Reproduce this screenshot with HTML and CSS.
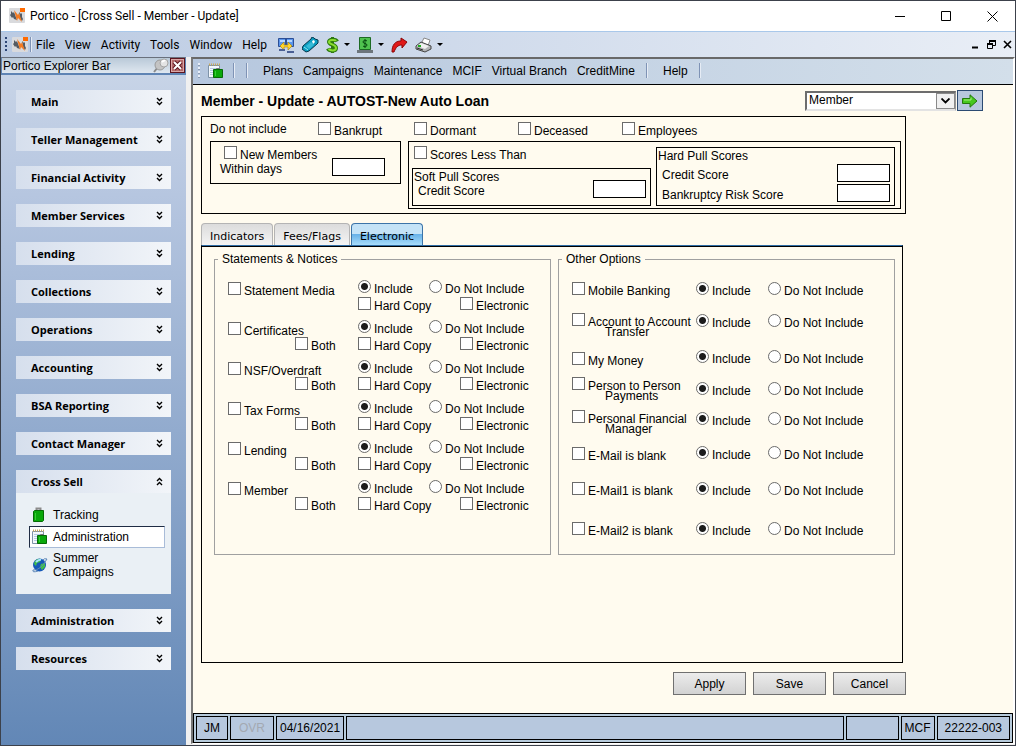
FILE: index.html
```html
<!DOCTYPE html>
<html lang="en">
<head>
  <meta charset="UTF-8">
  <title>Portico - [Cross Sell - Member - Update]</title>
  <link rel="stylesheet" href="styles.css">
</head>
<body>

  <!-- Shared icons -->
  <svg class="defs" width="0" height="0">
    <symbol id="logo" viewBox="0 0 16 16">
      <rect width="16" height="15" rx="1" fill="#d9dadd"/>
      <path d="M2 3l2 2 1-1 3 8-3-1-1-2-1 1-2-3 1-1zM10 4l2 2 1-1v4l1 2-1 2-2-3z" fill="#555b63"/>
      <path d="M5 2l4 5 1-2 3 9-4-4-1 3z" fill="#f47a20"/>
      <rect x="11" y="0" width="5" height="4" fill="#ff6a00"/>
    </symbol>
    <symbol id="bag-page" viewBox="0 0 16 16">
      <path d="M.5 2.500h11v12H.5z" fill="#f4f8fc" stroke="#7e93a8"/>
      <path d="M1 1.500h11" stroke="#c9a95a" stroke-width="2" stroke-dasharray="1 1"/>
      <path d="M2 5.500h8M2 7.500h4M2 9.500h3M2 11.500h3" stroke="#b5c9e2"/>
      <path d="M8.500 7V5.500h3V7" fill="none" stroke="#777"/>
      <path d="M5.500 6.500h9v8h-9z" fill="#0aa80a" stroke="#056a05"/>
      <path d="M7.500 8v5" stroke="#35cf35"/>
    </symbol>
    <symbol id="down" viewBox="0 0 7 9">
      <path d="M1 1l2.500 2.500L6 1M1 5l2.500 2.500L6 5" fill="none" stroke="#000" stroke-width="1.400"/>
    </symbol>
    <symbol id="up" viewBox="0 0 7 9">
      <path d="M1 4l2.500-2.500L6 4M1 8l2.500-2.500L6 8" fill="none" stroke="#000" stroke-width="1.400"/>
    </symbol>
  </svg>

  <header class="titlebar">
    <svg class="icon16"><use href="#logo"/></svg>
    <span class="title">Portico - [Cross Sell - Member - Update]</span>
    <div class="window-buttons">
      <button aria-label="Minimize"><svg width="11" height="11"><path d="M0 5.500h10" stroke="#000"/></svg></button>
      <button aria-label="Maximize"><svg width="11" height="11"><path d="M.5.5h9v9h-9z" fill="none" stroke="#000"/></svg></button>
      <button aria-label="Close"><svg width="11" height="11"><path d="M.5.500l10 10M10.500.5l-10 10" stroke="#000"/></svg></button>
    </div>
  </header>

  <nav class="menubar">
    <span class="grip"></span>
    <svg class="icon16"><use href="#logo"/></svg>
    <span class="divider"></span>
    <div class="menus">
      <a href="#">File</a>
      <a href="#">View</a>
      <a href="#">Activity</a>
      <a href="#">Tools</a>
      <a href="#">Window</a>
      <a href="#">Help</a>
    </div>
    <div class="tools">
      <button aria-label="Transfer">
        <svg width="17" height="16"><path d="M.5 1.500h8v8h-8zM7.500 1.500h8v8h-8z" fill="#5b95ea" stroke="#2c4f96"/><path d="M2 3h5v2H2zM9 3h5v2H9z" fill="#b5d6ff"/><path d="M2 9l4-4v3h4V5l4 4-4 4v-3H6v3z" fill="#ffd52e" stroke="#a87c00" stroke-width=".6"/><path d="M1 13h6M9 15h7" stroke="#4a5f94" stroke-width="2"/></svg>
      </button>
      <button aria-label="Terminal">
        <svg width="17" height="16"><path d="M1 9L9 2l1-2 2 1 1 1 3 1v3l-1 1-8 7-3 1-4-3z" fill="#0b9cc0" stroke="#05384e"/><path d="M4 9l5-4 3 3-5 4z" fill="#37bbd8"/><path d="M10 4l2-1 1 2-2 2z" fill="#fff"/><path d="M2 10l4 3" stroke="#8ee9f5"/></svg>
      </button>
      <button class="dropdown" aria-label="Money">
        <svg width="13" height="16"><path d="M11 4.500C10 2 3 2 3 5s7 2.500 7 6-7 3-8 .5" fill="none" stroke="#2f7a10" stroke-width="4"/><path d="M6.500 0v16" stroke="#2f7a10" stroke-width="3"/><path d="M10 4C9 2.500 3 2.500 3 5s7 2.500 7 6-6 2.500-7.500 1" fill="none" stroke="#8ade30" stroke-width="2"/></svg>
        <span class="caret"></span>
      </button>
      <button class="dropdown" aria-label="Cash">
        <svg width="16" height="16"><path d="M0 13h16v3H0z" fill="#6d757c"/><path d="M2.500.5h11v12h-11z" fill="#4fc24f" stroke="#1d6b24"/><path d="M10 4C9 3 6 3 6 5s4 1 4 3-3 2-4 1M8 2v9" fill="none" stroke="#074a10"/></svg>
        <span class="caret"></span>
      </button>
      <button aria-label="Forward">
        <svg width="17" height="16"><path d="M1 15C1 8 4 4 10 4V1l6 4-5 6V8c-4 0-6 2-8 7z" fill="#e01818" stroke="#8c0505"/></svg>
      </button>
      <button class="dropdown" aria-label="Print">
        <svg width="17" height="16"><path d="M6 7l3-6 6 2-2 6z" fill="#fff" stroke="#888"/><path d="M1 9l5-4 10 4v3l-6 3-9-3z" fill="#b4b6b8" stroke="#444"/><path d="M2 9l4-3 8 3-4 3z" fill="#f0f0f0"/><path d="M2 11l6 2" stroke="#333"/><path d="M3 9h3" stroke="#1faf1f" stroke-width="2"/></svg>
        <span class="caret"></span>
      </button>
    </div>
    <div class="child-buttons">
      <button aria-label="Minimize window"><svg width="9" height="9"><path d="M1 7.500h6" stroke="#000" stroke-width="2"/></svg></button>
      <button aria-label="Restore window"><svg width="9" height="9"><path d="M2.500 3V.5h6v5H6M.5 3.500h5v5h-5z" fill="none" stroke="#000"/><path d="M2 1h7M0 4h6" stroke="#000" stroke-width="2"/></svg></button>
      <button aria-label="Close window"><svg width="9" height="9"><path d="M1 1l7 7M8 1L1 8" stroke="#000" stroke-width="1.600"/></svg></button>
    </div>
  </nav>

  <div class="workspace">

    <!-- Explorer bar -->
    <aside class="explorer">
      <div class="explorer-head">
        <span>Portico Explorer Bar</span>
        <button aria-label="Pin"><svg width="16" height="15"><path d="M1 14l4-5" stroke="#8a8a8a" stroke-width="2"/><ellipse cx="7" cy="7" rx="5" ry="5" fill="#c4c4c4" stroke="#9a9a9a"/><circle cx="11" cy="5" r="4" fill="#e4e4e4" stroke="#a5a5a5"/><path d="M9 4q2-2 3-1" stroke="#fff" fill="none" stroke-width="2"/></svg></button>
        <button aria-label="Close explorer"><svg width="15" height="15"><rect x=".5" y=".5" width="14" height="14" fill="#b56a6a" stroke="#5d1620"/><rect x="1.500" y="1.500" width="12" height="12" fill="none" stroke="#d9a7a7"/><path d="M4 4l7 7M11 4l-7 7" stroke="#5d1620" stroke-width="4"/><path d="M4 4l7 7M11 4l-7 7" stroke="#fff" stroke-width="2"/></svg></button>
      </div>
      <div class="groups">
        <button class="group">Main <svg><use href="#down"/></svg></button>
        <button class="group">Teller Management <svg><use href="#down"/></svg></button>
        <button class="group">Financial Activity <svg><use href="#down"/></svg></button>
        <button class="group">Member Services <svg><use href="#down"/></svg></button>
        <button class="group">Lending <svg><use href="#down"/></svg></button>
        <button class="group">Collections <svg><use href="#down"/></svg></button>
        <button class="group">Operations <svg><use href="#down"/></svg></button>
        <button class="group">Accounting <svg><use href="#down"/></svg></button>
        <button class="group">BSA Reporting <svg><use href="#down"/></svg></button>
        <button class="group">Contact Manager <svg><use href="#down"/></svg></button>
        <div class="group-open">
          <button class="group">Cross Sell <svg><use href="#up"/></svg></button>
          <div class="group-items">
            <a href="#">
              <svg class="icon16"><path d="M4.500 4V1.500h4V4" fill="none" stroke="#8b8b8b" stroke-width="2"/><path d="M1.500 4.500l1-1h9v10l-1 1h-9z" fill="#0aa80a" stroke="#056a05"/><path d="M3.500 6v7" stroke="#35cf35"/></svg>
              Tracking
            </a>
            <a href="#" class="current">
              <svg class="icon16"><use href="#bag-page"/></svg>
              Administration
            </a>
            <a href="#">
              <svg class="icon16"><circle cx="7.500" cy="8" r="6.500" fill="#1558b8"/><path d="M3 4q3-3 6-2L8 5 5 6 4 9 2 7zM9 7l4-1v4l-3 3-2-3z" fill="#3fbf4a"/><path d="M4 5q3-3 5-2" stroke="#a8e4ff" fill="none" stroke-width="2"/><path d="M1 13q7 1 14-11-3-1-4 1M1 13q-1 3 5 1" fill="none" stroke="#5d87b8"/></svg>
              Summer Campaigns
            </a>
          </div>
        </div>
        <button class="group">Administration <svg><use href="#down"/></svg></button>
        <button class="group">Resources <svg><use href="#down"/></svg></button>
      </div>
    </aside>

    <main class="child">
      <nav class="toolbar">
        <span class="grip light"></span>
        <button class="page-button" aria-label="Cross Sell Administration"><svg class="icon16"><use href="#bag-page"/></svg></button>
        <span class="divider"></span>
        <span class="divider"></span>
        <div class="links">
          <a href="#">Plans</a>
          <a href="#">Campaigns</a>
          <a href="#">Maintenance</a>
          <a href="#">MCIF</a>
          <a href="#">Virtual Branch</a>
          <a href="#">CreditMine</a>
        </div>
        <span class="divider"></span>
        <div class="links help"><a href="#">Help</a></div>
        <span class="divider"></span>
      </nav>

      <form class="page">
        <div class="page-head">
          <h1>Member - Update - AUTOST-New Auto Loan</h1>
          <div class="select">
            <select aria-label="Go to page"><option>Member</option></select>
            <span class="select-arrow"><svg width="9" height="6"><path d="M.5.500l4 4 4-4" fill="none" stroke="#000" stroke-width="1.800"/></svg></span>
          </div>
          <button type="button" class="go" aria-label="Go"><svg width="16" height="14"><path d="M.5 4.500H8V.8L15 7l-7 6.200V9.500H.5z" fill="#46c81e" stroke="#23780c"/><path d="M2 6h7V3.500" fill="none" stroke="#a4f07c"/></svg></button>
        </div>

        <section class="filters">
          <div class="filter-flags">
            <span>Do not include</span>
            <label class="check"><input type="checkbox"><span>Bankrupt</span></label>
            <label class="check"><input type="checkbox"><span>Dormant</span></label>
            <label class="check"><input type="checkbox"><span>Deceased</span></label>
            <label class="check"><input type="checkbox"><span>Employees</span></label>
          </div>
          <div class="filter-boxes">
            <div class="box new-members">
              <div class="new-members-text">
                <label class="check"><input type="checkbox"><span>New Members</span></label>
                <label class="within" for="days">Within days</label>
              </div>
              <input type="text" id="days">
            </div>
            <div class="box scores">
              <div class="scores-soft">
                <label class="check"><input type="checkbox"><span>Scores Less Than</span></label>
                <div class="box soft">
                  <div class="soft-text">
                    <div>Soft Pull Scores</div>
                    <label for="soft-score">Credit Score</label>
                  </div>
                  <input type="text" id="soft-score">
                </div>
              </div>
              <div class="box hard">
                <div class="hard-title">Hard Pull Scores</div>
                <div class="score"><label for="hard-score">Credit Score</label><input type="text" id="hard-score"></div>
                <div class="score"><label for="risk-score">Bankruptcy Risk Score</label><input type="text" id="risk-score"></div>
              </div>
            </div>
          </div>
        </section>

        <div class="tabs">
          <button type="button">Indicators</button>
          <button type="button">Fees/Flags</button>
          <button type="button" class="active">Electronic</button>
        </div>

        <div class="panel">
          <fieldset>
            <legend>Statements &amp; Notices</legend>
            <div class="notices">
              <div class="notice">
                <label class="check name"><input type="checkbox"><span>Statement Media</span></label>
                <div class="modes">
                  <label class="check"><input type="radio" name="media" checked><span>Include</span></label>
                  <label class="check"><input type="radio" name="media"><span>Do Not Include</span></label>
                </div>
                <span></span>
                <div class="copies">
                  <label class="check"><input type="checkbox"><span>Hard Copy</span></label>
                  <label class="check"><input type="checkbox"><span>Electronic</span></label>
                </div>
              </div>
              <div class="notice">
                <label class="check name"><input type="checkbox"><span>Certificates</span></label>
                <div class="modes">
                  <label class="check"><input type="radio" name="certificates" checked><span>Include</span></label>
                  <label class="check"><input type="radio" name="certificates"><span>Do Not Include</span></label>
                </div>
                <label class="check both"><input type="checkbox"><span>Both</span></label>
                <div class="copies">
                  <label class="check"><input type="checkbox"><span>Hard Copy</span></label>
                  <label class="check"><input type="checkbox"><span>Electronic</span></label>
                </div>
              </div>
              <div class="notice">
                <label class="check name"><input type="checkbox"><span>NSF/Overdraft</span></label>
                <div class="modes">
                  <label class="check"><input type="radio" name="nsf" checked><span>Include</span></label>
                  <label class="check"><input type="radio" name="nsf"><span>Do Not Include</span></label>
                </div>
                <label class="check both"><input type="checkbox"><span>Both</span></label>
                <div class="copies">
                  <label class="check"><input type="checkbox"><span>Hard Copy</span></label>
                  <label class="check"><input type="checkbox"><span>Electronic</span></label>
                </div>
              </div>
              <div class="notice">
                <label class="check name"><input type="checkbox"><span>Tax Forms</span></label>
                <div class="modes">
                  <label class="check"><input type="radio" name="tax" checked><span>Include</span></label>
                  <label class="check"><input type="radio" name="tax"><span>Do Not Include</span></label>
                </div>
                <label class="check both"><input type="checkbox"><span>Both</span></label>
                <div class="copies">
                  <label class="check"><input type="checkbox"><span>Hard Copy</span></label>
                  <label class="check"><input type="checkbox"><span>Electronic</span></label>
                </div>
              </div>
              <div class="notice">
                <label class="check name"><input type="checkbox"><span>Lending</span></label>
                <div class="modes">
                  <label class="check"><input type="radio" name="lending" checked><span>Include</span></label>
                  <label class="check"><input type="radio" name="lending"><span>Do Not Include</span></label>
                </div>
                <label class="check both"><input type="checkbox"><span>Both</span></label>
                <div class="copies">
                  <label class="check"><input type="checkbox"><span>Hard Copy</span></label>
                  <label class="check"><input type="checkbox"><span>Electronic</span></label>
                </div>
              </div>
              <div class="notice">
                <label class="check name"><input type="checkbox"><span>Member</span></label>
                <div class="modes">
                  <label class="check"><input type="radio" name="member" checked><span>Include</span></label>
                  <label class="check"><input type="radio" name="member"><span>Do Not Include</span></label>
                </div>
                <label class="check both"><input type="checkbox"><span>Both</span></label>
                <div class="copies">
                  <label class="check"><input type="checkbox"><span>Hard Copy</span></label>
                  <label class="check"><input type="checkbox"><span>Electronic</span></label>
                </div>
              </div>
            </div>
          </fieldset>

          <fieldset>
            <legend>Other Options</legend>
            <div class="options">
              <div class="option-names">
                <label class="check"><input type="checkbox"><span>Mobile Banking</span></label>
                <label class="check two-line"><input type="checkbox"><span>Account to Account <span class="second">Transfer</span></span></label>
                <label class="check"><input type="checkbox"><span>My Money</span></label>
                <label class="check two-line"><input type="checkbox"><span>Person to Person <span class="second">Payments</span></span></label>
                <label class="check two-line"><input type="checkbox"><span>Personal Financial <span class="second">Manager</span></span></label>
                <label class="check"><input type="checkbox"><span>E-Mail is blank</span></label>
                <label class="check"><input type="checkbox"><span>E-Mail1 is blank</span></label>
                <label class="check"><input type="checkbox"><span>E-Mail2 is blank</span></label>
              </div>
              <div class="option-modes">
                <label class="check"><input type="radio" name="mobile" checked><span>Include</span></label>
                <label class="check"><input type="radio" name="mobile"><span>Do Not Include</span></label>
                <label class="check"><input type="radio" name="a2a" checked><span>Include</span></label>
                <label class="check"><input type="radio" name="a2a"><span>Do Not Include</span></label>
                <label class="check"><input type="radio" name="money" checked><span>Include</span></label>
                <label class="check"><input type="radio" name="money"><span>Do Not Include</span></label>
                <label class="check"><input type="radio" name="p2p" checked><span>Include</span></label>
                <label class="check"><input type="radio" name="p2p"><span>Do Not Include</span></label>
                <label class="check"><input type="radio" name="pfm" checked><span>Include</span></label>
                <label class="check"><input type="radio" name="pfm"><span>Do Not Include</span></label>
                <label class="check"><input type="radio" name="email" checked><span>Include</span></label>
                <label class="check"><input type="radio" name="email"><span>Do Not Include</span></label>
                <label class="check"><input type="radio" name="email1" checked><span>Include</span></label>
                <label class="check"><input type="radio" name="email1"><span>Do Not Include</span></label>
                <label class="check"><input type="radio" name="email2" checked><span>Include</span></label>
                <label class="check"><input type="radio" name="email2"><span>Do Not Include</span></label>
              </div>
            </div>
          </fieldset>
        </div>

        <div class="actions">
          <button type="button">Apply</button>
          <button type="button">Save</button>
          <button type="button">Cancel</button>
        </div>
      </form>

      <footer class="status">
        <span>JM</span>
        <span class="off">OVR</span>
        <span class="tight">04/16/2021</span>
        <span class="message"></span>
        <span class="blank"></span>
        <span class="tight">MCF</span>
        <span>22222-003</span>
      </footer>
    </main>
  </div>

</body>
</html>
```
FILE: styles.css
```css
* {
  box-sizing: border-box;
}

body {
  margin: 0;
  min-height: 100vh;
  display: flex;
  flex-direction: column;
  border: 1px solid #3c414b;
  background: #f0f0f0;
  font-family: "Liberation Sans", Arial, sans-serif;
  font-size: 12px;
  line-height: 14px;
  color: #000;
}

button, input, select {
  font: inherit;
  color: inherit;
  margin: 0;
  padding: 0;
}

button {
  border: none;
  background: none;
}

a {
  color: inherit;
  text-decoration: none;
}

svg {
  display: block;
  flex: none;
}

.defs {
  position: absolute;
}

.icon16 {
  width: 16px;
  height: 16px;
}

/* Title bar */
.titlebar {
  display: flex;
  align-items: center;
  height: 30px;
  padding-left: 8px;
  background: #fff;
}

.title {
  flex: 1;
  margin-left: 5px;
  font-family: Roboto, sans-serif;
}

.window-buttons {
  display: flex;
}

.window-buttons button {
  width: 46px;
  height: 28px;
  display: flex;
  align-items: center;
  justify-content: center;
}

/* Menu bar */
.menubar {
  display: flex;
  align-items: center;
  height: 26px;
  padding: 0 3px 0 4px;
  border-top: 1px solid #a9c8ea;
  background: linear-gradient(to right, #bacae2, #e9eef6);
}

.grip {
  width: 2px;
  height: 15px;
  background: repeating-linear-gradient(to bottom, #2d4676 0 2px, transparent 2px 4px);
}

.grip.light {
  background: repeating-linear-gradient(to bottom, #e8eef8 0 2px, #8e9db5 2px 3px, transparent 3px 4px);
}

.menubar .icon16 {
  margin-left: 5px;
}

.divider {
  width: 2px;
  height: 15px;
  border-left: 1px solid #7f93b5;
  border-right: 1px solid #e6ecf5;
}

.menubar .divider {
  margin-left: 2px;
}

.menus {
  display: flex;
  gap: 10px;
  margin-left: 4px;
  font-family: Roboto, sans-serif;
}

.tools {
  display: flex;
  gap: 7px;
  margin-left: 11px;
}

.dropdown {
  display: flex;
  align-items: center;
  gap: 5px;
}

.caret {
  border: 3px solid transparent;
  border-top-color: #000;
  border-bottom: none;
}

.child-buttons {
  display: flex;
  gap: 7px;
  margin-left: auto;
}

.workspace {
  flex: 1;
  display: flex;
}

/* Explorer bar */
.explorer {
  width: 185px;
  flex: none;
  background: linear-gradient(to bottom, #cad6e8, #b6c6e0 20%, #6287b6);
}

.explorer-head {
  display: flex;
  align-items: center;
  gap: 1px;
  height: 18px;
  padding-left: 1px;
  border: 1px solid #5f84b4;
  border-top-color: #69707c;
  border-bottom-width: 2px;
  background: linear-gradient(to bottom, #b9c9d8, #dfe7f0);
}

.explorer-head span {
  flex: 1;
}

.groups {
  display: flex;
  flex-direction: column;
  gap: 15px;
  padding: 15px;
}

.group {
  display: flex;
  align-items: center;
  justify-content: space-between;
  width: 100%;
  height: 23px;
  padding: 0 8px 0 15px;
  background: linear-gradient(to right, #d6dfed, #f2f5f9);
  font-family: "Open Sans", sans-serif;
  font-size: 11px;
  font-weight: bold;
}

.group svg {
  width: 7px;
  height: 9px;
}

.group-items {
  padding: 11px 6px 12px 13px;
  background: #eaf0f5;
}

.group-items a {
  display: flex;
  align-items: center;
  gap: 5px;
  min-height: 22px;
  padding: 0 32px 0 2px;
  border: 1px solid transparent;
}

.group-items .current {
  border-color: #1f2c44 #a9bcd8 #a9bcd8 #1f2c44;
  background: #fff;
}

.group-items a:last-child {
  min-height: 34px;
}

/* Child window */
.child {
  flex: 1;
  display: flex;
  flex-direction: column;
  margin: 0 0 1px 5px;
  border: 2px solid #fff;
  border-top-color: #696969;
  border-left-color: #777;
  border-bottom-width: 1px;
  background: #fffbef;
}

.toolbar {
  display: flex;
  align-items: center;
  height: 26px;
  padding: 0 0 2px 5px;
  border-bottom: 1px solid #000;
  background: linear-gradient(to right, #b6c7de, #d3dfea);
}

.page-button {
  margin: 0 9px 0 8px;
}

.toolbar .divider {
  margin-right: 11px;
}

.links {
  display: flex;
  gap: 10px;
  margin: 0 11px 0 4px;
}

.page {
  flex: 1;
  width: 100%;
  padding-left: 8px;
}

.page-head {
  display: flex;
  align-items: center;
  max-width: 782px;
  height: 31px;
  gap: 1px;
}

.page-head h1 {
  flex: 1;
  margin: 0;
  font-size: 14px;
  line-height: 16px;
}

.select {
  position: relative;
  width: 151px;
  height: 20px;
}

.select select {
  width: 100%;
  height: 100%;
  padding: 0 20px 2px 2px;
  border: 2px solid #6d6d6d;
  border-right: 1px solid #999;
  border-bottom: 2px solid #e3e3e3;
  border-radius: 0;
  appearance: none;
  background: #fff;
}

.select-arrow {
  position: absolute;
  top: 2px;
  right: 1px;
  width: 19px;
  height: 16px;
  display: flex;
  align-items: center;
  justify-content: center;
  border: 1px solid #8a8a8a;
  background: #f0f0f0;
  pointer-events: none;
}

.go {
  display: flex;
  align-items: center;
  justify-content: center;
  width: 26px;
  height: 21px;
  border: 1px solid #2b4a72;
  background: #b8c8de;
}

/* Tick boxes and radios, text sits a little below the box */
.check {
  display: flex;
  align-items: flex-start;
  gap: 3px;
  white-space: nowrap;
}

.check > span {
  margin-top: 2px;
}

input[type="checkbox"], input[type="radio"] {
  flex: none;
  width: 13px;
  height: 13px;
  border: 1px solid #6b6b6b;
  appearance: none;
  background: #fff;
}

input[type="radio"] {
  border-radius: 50%;
}

input[type="radio"]:checked {
  background: radial-gradient(circle, #1c1c1c 3px, #fff 4px);
}

input[type="text"] {
  flex: none;
  width: 53px;
  height: 18px;
  border: 1px solid #000;
  background: #fff;
}

/* Filters */
.filters {
  max-width: 705px;
  padding: 0 4px 4px 8px;
  border: 1px solid #000;
}

.filter-flags {
  display: grid;
  grid-template-columns: 108px 96px 104px 104px 1fr;
  height: 24px;
  padding-top: 5px;
}

.filter-boxes {
  display: flex;
  align-items: flex-start;
  gap: 7px;
}

.box {
  border: 1px solid #000;
}

.new-members {
  display: flex;
  align-items: flex-end;
  width: 191px;
  height: 43px;
  padding-bottom: 7px;
}

.new-members-text {
  width: 121px;
  padding-left: 13px;
}

.within {
  display: block;
  margin-left: -4px;
}

.scores {
  flex: 1;
  display: flex;
  gap: 5px;
  padding: 0 5px 2px 3px;
}

.scores-soft {
  flex: 1;
}

.scores-soft > .check {
  height: 26px;
  padding: 4px 0 0 2px;
}

.soft {
  display: flex;
  align-items: flex-end;
  justify-content: space-between;
  height: 38px;
  padding: 0 4px 7px 1px;
}

.soft-text {
  align-self: flex-start;
  padding-top: 1px;
}

.soft-text label {
  padding-left: 4px;
}

.hard {
  flex: none;
  width: 239px;
  display: flex;
  flex-direction: column;
  gap: 2px;
  margin-top: 5px;
  padding: 0 4px 0 1px;
}

.hard-title {
  height: 14px;
  line-height: 16px;
}

.score {
  display: flex;
  align-items: flex-end;
  justify-content: space-between;
  padding-left: 4px;
}

/* Tabs */
.tabs {
  display: flex;
  gap: 1px;
  margin-top: 9px;
}

.tabs button {
  height: 22px;
  padding: 4px 8px 0;
  border: 1px solid #b4b4b4;
  border-bottom: none;
  border-radius: 4px 4px 0 0;
  background: linear-gradient(to bottom, #dcdcdc, #f4f4f4);
  font-family: "DejaVu Sans", sans-serif;
  font-size: 11px;
}

.tabs .active {
  border-color: #3c74a8;
  background: linear-gradient(to bottom, #c4e3f7 0 50%, #68b2e8 50%, #a8dcfa);
}

.panel {
  display: flex;
  gap: 7px;
  align-items: flex-start;
  max-width: 702px;
  min-height: 418px;
  padding: 5px 7px 0 12px;
  border: 1px solid #000;
  border-top: 1px solid #2f6da6;
  box-shadow: inset 0 1px #000;
}

fieldset {
  flex: 1;
  min-width: 0;
  min-height: 304px;
  margin: 0;
  padding: 13px 0 0 13px;
  border: 1px solid #a0a0a0;
}

legend {
  margin-left: -10px;
  padding: 0 4px;
  line-height: 16px;
}

.notices {
  display: flex;
  flex-direction: column;
  gap: 6px;
}

.notice {
  display: grid;
  grid-template-columns: 130px 1fr;
  grid-template-rows: 17px 17px;
}

.name {
  padding-top: 2px;
}

.both {
  padding-left: 67px;
}

.modes {
  display: grid;
  grid-template-columns: 71px 1fr;
}

.copies {
  display: grid;
  grid-template-columns: 102px 1fr;
}

.options {
  display: flex;
  padding-top: 2px;
}

.option-names {
  width: 124px;
  display: grid;
  grid-template-rows: 31px 39px 25px 33px 37px 35px 40px 16px;
}

.option-modes {
  flex: 1;
  display: grid;
  grid-template-columns: 72px 1fr;
  grid-template-rows: 32px 36px 32px 30px 34px 36px 40px 16px;
}

.two-line > span {
  margin-top: 4px;
  line-height: 10px;
}

.second {
  display: block;
  padding-left: 17px;
}

.actions {
  display: flex;
  justify-content: flex-end;
  gap: 7px;
  max-width: 705px;
  padding: 9px 0;
}

.actions button {
  width: 73px;
  height: 23px;
  border: 1px solid #707070;
  background: linear-gradient(to bottom, #ececec, #d2d2d2);
}

/* Status bar */
.status {
  display: flex;
  gap: 2px;
  padding: 2px;
  border: 1px solid #000;
  background: #b7cbdc;
}

.status span {
  height: 24px;
  padding: 0 7px;
  border: 1px solid #000;
  background: #b7c8de;
  line-height: 22px;
}

.status .off {
  padding: 0 8px;
  color: #a3a9b2;
}

.status .tight {
  padding: 0 3px;
}

.status .message {
  flex: 1;
}

.status .blank {
  width: 53px;
}
```
